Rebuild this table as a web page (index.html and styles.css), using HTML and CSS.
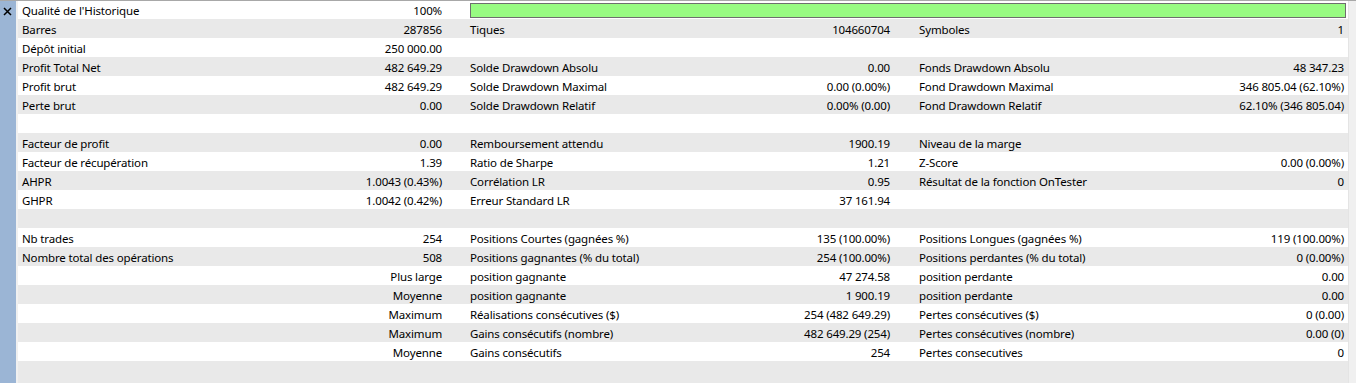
FILE: index.html
```html
<!DOCTYPE html>
<html lang="fr">
<head>
<meta charset="utf-8">
<title>Rapport</title>
<link rel="stylesheet" href="styles.css">
</head>
<body>
<div class="frame">
  <div class="strip">
    <svg class="close" width="9" height="9" viewBox="0 0 9 9"><path d="M1 1 L8 8 M8 1 L1 8" stroke="#000" stroke-width="1.5" fill="none"/></svg>
  </div>
  <div class="gap"></div>
  <div class="report">
    <div class="row"><span class="l">Qualité de l'Historique</span><span class="v">100%</span><span class="barcell"><span class="bar"></span></span></div>
    <div class="row"><span class="l">Barres</span><span class="v">287856</span><span class="l2">Tiques</span><span class="v">104660704</span><span class="l3">Symboles</span><span class="v">1</span></div>
    <div class="row"><span class="l">Dépôt initial</span><span class="v">250 000.00</span><span class="l2"></span><span class="v"></span><span class="l3"></span><span class="v"></span></div>
    <div class="row"><span class="l">Profit Total Net</span><span class="v">482 649.29</span><span class="l2">Solde Drawdown Absolu</span><span class="v">0.00</span><span class="l3">Fonds Drawdown Absolu</span><span class="v">48 347.23</span></div>
    <div class="row"><span class="l">Profit brut</span><span class="v">482 649.29</span><span class="l2">Solde Drawdown Maximal</span><span class="v">0.00 (0.00%)</span><span class="l3">Fond Drawdown Maximal</span><span class="v">346 805.04 (62.10%)</span></div>
    <div class="row"><span class="l">Perte brut</span><span class="v">0.00</span><span class="l2">Solde Drawdown Relatif</span><span class="v">0.00% (0.00)</span><span class="l3">Fond Drawdown Relatif</span><span class="v">62.10% (346 805.04)</span></div>
    <div class="row"><span class="l"></span><span class="v"></span><span class="l2"></span><span class="v"></span><span class="l3"></span><span class="v"></span></div>
    <div class="row"><span class="l">Facteur de profit</span><span class="v">0.00</span><span class="l2">Remboursement attendu</span><span class="v">1900.19</span><span class="l3">Niveau de la marge</span><span class="v"></span></div>
    <div class="row"><span class="l">Facteur de récupération</span><span class="v">1.39</span><span class="l2">Ratio de Sharpe</span><span class="v">1.21</span><span class="l3">Z-Score</span><span class="v">0.00 (0.00%)</span></div>
    <div class="row"><span class="l">AHPR</span><span class="v">1.0043 (0.43%)</span><span class="l2">Corrélation LR</span><span class="v">0.95</span><span class="l3">Résultat de la fonction OnTester</span><span class="v">0</span></div>
    <div class="row"><span class="l">GHPR</span><span class="v">1.0042 (0.42%)</span><span class="l2">Erreur Standard LR</span><span class="v">37 161.94</span><span class="l3"></span><span class="v"></span></div>
    <div class="row"><span class="l"></span><span class="v"></span><span class="l2"></span><span class="v"></span><span class="l3"></span><span class="v"></span></div>
    <div class="row"><span class="l">Nb trades</span><span class="v">254</span><span class="l2">Positions Courtes (gagnées %)</span><span class="v">135 (100.00%)</span><span class="l3">Positions Longues (gagnées %)</span><span class="v">119 (100.00%)</span></div>
    <div class="row"><span class="l">Nombre total des opérations</span><span class="v">508</span><span class="l2">Positions gagnantes (% du total)</span><span class="v">254 (100.00%)</span><span class="l3">Positions perdantes (% du total)</span><span class="v">0 (0.00%)</span></div>
    <div class="row"><span class="l"></span><span class="v">Plus large</span><span class="l2">position gagnante</span><span class="v">47 274.58</span><span class="l3">position perdante</span><span class="v">0.00</span></div>
    <div class="row"><span class="l"></span><span class="v">Moyenne</span><span class="l2">position gagnante</span><span class="v">1 900.19</span><span class="l3">position perdante</span><span class="v">0.00</span></div>
    <div class="row"><span class="l"></span><span class="v">Maximum</span><span class="l2">Réalisations consécutives ($)</span><span class="v">254 (482 649.29)</span><span class="l3">Pertes consécutives ($)</span><span class="v">0 (0.00)</span></div>
    <div class="row"><span class="l"></span><span class="v">Maximum</span><span class="l2">Gains consécutifs (nombre)</span><span class="v">482 649.29 (254)</span><span class="l3">Pertes consécutives (nombre)</span><span class="v">0.00 (0)</span></div>
    <div class="row"><span class="l"></span><span class="v">Moyenne</span><span class="l2">Gains consécutifs</span><span class="v">254</span><span class="l3">Pertes consecutives</span><span class="v">0</span></div>
    <div class="row last"><span class="l"></span><span class="v"></span><span class="l2"></span><span class="v"></span><span class="l3"></span><span class="v"></span></div>
  </div>
  <div class="edge"></div>
</div>
</body>
</html>
```

FILE: styles.css
```css
html, body {
  margin: 0;
  padding: 0;
  background: #ffffff;
  overflow: hidden;
}
body {
  font-family: "Noto Sans", "Open Sans", sans-serif;
  font-size: 11.5px;
  letter-spacing: -0.15px;
  color: #000;
}
.frame {
  display: flex;
  width: 1356px;
  height: 383px;
  border-top: 1px solid #a8a8a8;
  box-sizing: border-box;
}
.strip {
  width: 16px;
  background: #9bb5d5;
  flex: none;
  display: flex;
  justify-content: center;
  align-items: flex-start;
}
.close {
  margin-top: 6px;
  margin-left: -1px;
}
.gap {
  width: 2px;
  background: #f0f0f0;
  flex: none;
}
.report {
  width: 1330px;
  flex: none;
  display: flex;
  flex-direction: column;
}
.row {
  display: grid;
  grid-template-columns: 232px 196px 224px 224px 206px 248px;
  height: 19px;
  box-sizing: border-box;
  padding-top: 2px;
  line-height: 17px;
  flex: none;
  background: #ffffff;
  white-space: nowrap;
}
.row:first-child {
  height: 18px;
  padding-top: 1px;
  line-height: 17px;
}
.row:nth-child(even) {
  background: #e9e9e9;
}
.row.last {
  height: 22px;
}
.l { padding-left: 4px; }
.l2 { padding-left: 24px; }
.l3 { padding-left: 25px; }
.v { text-align: right; padding-right: 4px; }
.barcell {
  grid-column: 3 / 7;
  padding: 1px 2px 0 24px;
  box-sizing: border-box;
}
.bar {
  display: block;
  height: 15px;
  box-sizing: border-box;
  border: 1px solid #6e6e6e;
  background: #98fb82;
}
.edge {
  flex: 1;
  background: #f0f0f0;
  border-left: 1px solid #e4e4e4;
}
```
